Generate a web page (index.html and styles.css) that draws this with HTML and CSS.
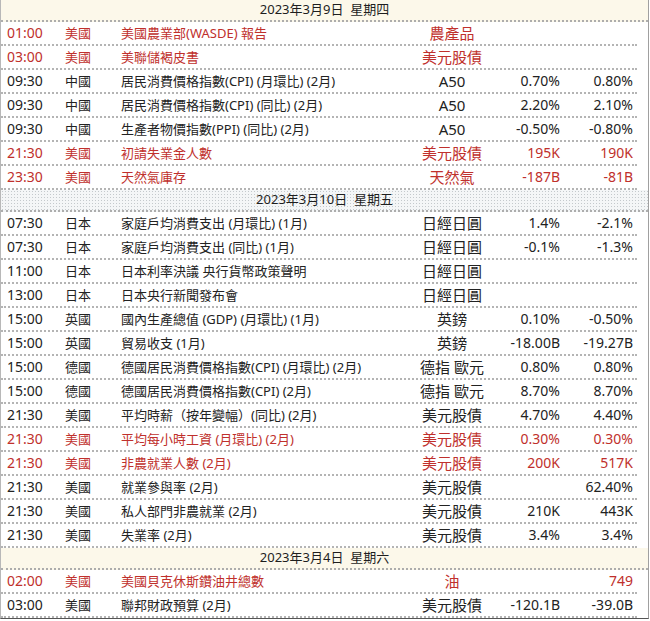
FILE: index.html
```html
<!DOCTYPE html>
<html lang="zh-Hant">
<head>
<meta charset="utf-8">
<title>財經日曆</title>
<link rel="stylesheet" href="styles.css">
</head>
<body>
<div class="cal">
  <div class="day day-cream">2023年3月9日&nbsp;&nbsp;星期四</div>
  <div class="row red"><span class="t">01:00</span><span class="c">美國</span><span class="e">美國農業部(WASDE) 報告</span><span class="a">農產品</span><span class="v"></span><span class="v"></span></div>
  <div class="row red"><span class="t">03:00</span><span class="c">美國</span><span class="e">美聯儲褐皮書</span><span class="a">美元股債</span><span class="v"></span><span class="v"></span></div>
  <div class="row"><span class="t">09:30</span><span class="c">中國</span><span class="e">居民消費價格指數(CPI) (月環比) (2月)</span><span class="a">A50</span><span class="v">0.70%</span><span class="v">0.80%</span></div>
  <div class="row"><span class="t">09:30</span><span class="c">中國</span><span class="e">居民消費價格指數(CPI) (同比) (2月)</span><span class="a">A50</span><span class="v">2.20%</span><span class="v">2.10%</span></div>
  <div class="row"><span class="t">09:30</span><span class="c">中國</span><span class="e">生產者物價指數(PPI) (同比) (2月)</span><span class="a">A50</span><span class="v">-0.50%</span><span class="v">-0.80%</span></div>
  <div class="row red"><span class="t">21:30</span><span class="c">美國</span><span class="e">初請失業金人數</span><span class="a">美元股債</span><span class="v">195K</span><span class="v">190K</span></div>
  <div class="row red"><span class="t">23:30</span><span class="c">美國</span><span class="e">天然氣庫存</span><span class="a">天然氣</span><span class="v">-187B</span><span class="v">-81B</span></div>

  <div class="day day-dots">2023年3月10日&nbsp;&nbsp;星期五</div>
  <div class="row"><span class="t">07:30</span><span class="c">日本</span><span class="e">家庭戶均消費支出 (月環比) (1月)</span><span class="a">日經日圓</span><span class="v">1.4%</span><span class="v">-2.1%</span></div>
  <div class="row"><span class="t">07:30</span><span class="c">日本</span><span class="e">家庭戶均消費支出 (同比) (1月)</span><span class="a">日經日圓</span><span class="v">-0.1%</span><span class="v">-1.3%</span></div>
  <div class="row"><span class="t">11:00</span><span class="c">日本</span><span class="e">日本利率決議 央行貨幣政策聲明</span><span class="a">日經日圓</span><span class="v"></span><span class="v"></span></div>
  <div class="row"><span class="t">13:00</span><span class="c">日本</span><span class="e">日本央行新聞發布會</span><span class="a">日經日圓</span><span class="v"></span><span class="v"></span></div>
  <div class="row"><span class="t">15:00</span><span class="c">英國</span><span class="e">國內生產總值 (GDP) (月環比) (1月)</span><span class="a">英鎊</span><span class="v">0.10%</span><span class="v">-0.50%</span></div>
  <div class="row"><span class="t">15:00</span><span class="c">英國</span><span class="e">貿易收支 (1月)</span><span class="a">英鎊</span><span class="v">-18.00B</span><span class="v">-19.27B</span></div>
  <div class="row"><span class="t">15:00</span><span class="c">德國</span><span class="e">德國居民消費價格指數(CPI) (月環比) (2月)</span><span class="a">德指 歐元</span><span class="v">0.80%</span><span class="v">0.80%</span></div>
  <div class="row"><span class="t">15:00</span><span class="c">德國</span><span class="e">德國居民消費價格指數(CPI) (2月)</span><span class="a">德指 歐元</span><span class="v">8.70%</span><span class="v">8.70%</span></div>
  <div class="row"><span class="t">21:30</span><span class="c">美國</span><span class="e">平均時薪（按年變幅）(同比) (2月)</span><span class="a">美元股債</span><span class="v">4.70%</span><span class="v">4.40%</span></div>
  <div class="row red"><span class="t">21:30</span><span class="c">美國</span><span class="e">平均每小時工資 (月環比) (2月)</span><span class="a">美元股債</span><span class="v">0.30%</span><span class="v">0.30%</span></div>
  <div class="row red"><span class="t">21:30</span><span class="c">美國</span><span class="e">非農就業人數 (2月)</span><span class="a">美元股債</span><span class="v">200K</span><span class="v">517K</span></div>
  <div class="row"><span class="t">21:30</span><span class="c">美國</span><span class="e">就業參與率 (2月)</span><span class="a">美元股債</span><span class="v"></span><span class="v">62.40%</span></div>
  <div class="row"><span class="t">21:30</span><span class="c">美國</span><span class="e">私人部門非農就業 (2月)</span><span class="a">美元股債</span><span class="v">210K</span><span class="v">443K</span></div>
  <div class="row"><span class="t">21:30</span><span class="c">美國</span><span class="e">失業率 (2月)</span><span class="a">美元股債</span><span class="v">3.4%</span><span class="v">3.4%</span></div>

  <div class="day day-cream">2023年3月4日&nbsp;&nbsp;星期六</div>
  <div class="row red"><span class="t">02:00</span><span class="c">美國</span><span class="e">美國貝克休斯鑽油井總數</span><span class="a">油</span><span class="v"></span><span class="v">749</span></div>
  <div class="row"><span class="t">03:00</span><span class="c">美國</span><span class="e">聯邦財政預算 (2月)</span><span class="a">美元股債</span><span class="v">-120.1B</span><span class="v">-39.0B</span></div>
</div>
</body>
</html>
```

FILE: styles.css
```css
html, body {
  margin: 0;
  padding: 0;
  background: #ffffff;
}

body {
  font-family: "Noto Sans", "Noto Sans CJK TC", sans-serif;
  color: #222222;
}

.cal {
  width: 649px;
  box-sizing: border-box;
  border-left: 1px solid #b8b8b8;
  border-right: 1px solid #a0a0a0;
  border-bottom: 1px solid #555555;
  display: flex;
  flex-direction: column;
}

.day {
  height: 22px;
  box-sizing: border-box;
  border-bottom: 2px dotted #adadad;
  display: flex;
  align-items: center;
  justify-content: center;
  font-size: 13px;
  color: #1e1e1e;
  line-height: 1;
  padding-bottom: 1px;
  font-family: "Noto Sans", "Noto Sans CJK TC", sans-serif;
}

.day-cream {
  background: #fcf8ea;
}

.day-dots {
  background-color: #f4f6f7;
  background-image: radial-gradient(circle, #c4c9cc 0.7px, transparent 0.8px);
  background-size: 3px 3px;
}

.row {
  width: 636px;
  height: 24px;
  box-sizing: border-box;
  padding-left: 6px;
  border-bottom: 2px dotted #b4b4b4;
  display: grid;
  grid-template-columns: 58px 56px 283px 96px 60px 73px;
  align-items: center;
  line-height: 1;
}

.row.red {
  color: #c0302c;
}

.t {
  font-size: 14px;
}

.c {
  font-size: 13px;
}

.e {
  font-size: 13px;
  white-space: nowrap;
}

.a {
  font-size: 15px;
  text-align: center;
  white-space: nowrap;
}

.v {
  font-size: 14px;
  text-align: right;
  white-space: nowrap;
}
```
